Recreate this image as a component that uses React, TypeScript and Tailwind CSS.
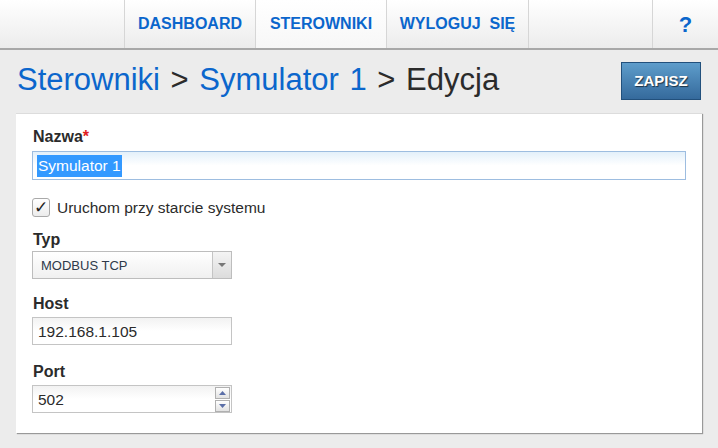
import React from 'react';

const font = { fontFamily: '"Liberation Sans", Arial, sans-serif' };

function NavCell({ label, active, className }: { label?: string; active?: boolean; className: string }) {
  return (
    <div
      className={`h-full flex items-center justify-center whitespace-nowrap border-l border-[#d6d6d6] font-bold text-[#0b66cc] ${
        active ? 'bg-gradient-to-b from-white to-[#f7f7f7]' : ''
      } ${className}`}
    >
      {label}
    </div>
  );
}

function Label({ children }: { children: React.ReactNode }) {
  return <div className="text-[16px] font-bold text-[#2b2b2b] leading-[18px]">{children}</div>;
}

export default function App() {
  return (
    <div className="w-[718px] h-[448px] bg-[#ececec] overflow-hidden" style={font}>
      {/* top navigation */}
      <div className="h-[50px] flex bg-gradient-to-b from-white to-[#ececec] border-b-2 border-[#a8a8a8]">
        <div className="w-[124px]" />
        <NavCell label="DASHBOARD" className="w-[131px] text-[16px]" />
        <NavCell label="STEROWNIKI" active className="w-[131px] text-[16px]" />
        <NavCell label={'WYLOGUJ\u00a0 SIĘ'} className="w-[142px] text-[16px]" />
        <NavCell className="w-[124px]" />
        <NavCell label="?" className="flex-1 text-[22px]" />
      </div>

      {/* header */}
      <div className="flex items-start justify-between pl-[17px] pr-[17px] pt-[11px] h-[63px]">
        <h1 className="text-[31px] leading-[38px] text-[#0b66cc] [word-spacing:2px]">
          Sterowniki <span className="text-[#2b2b2b]">&gt;</span> Symulator 1{' '}
          <span className="text-[#2b2b2b]">&gt; Edycja</span>
        </h1>
        <button className="mt-[1px] w-[80px] h-[38px] border border-[#22507c] bg-gradient-to-b from-[#5e9dcb] to-[#356a9c] text-white text-[15px] font-bold [text-shadow:1px_1px_1px_rgba(0,0,0,0.6)]">
          ZAPISZ
        </button>
      </div>

      {/* form card */}
      <div className="ml-[16px] w-[686px] h-[320px] bg-white border-t border-[#dcdcdc] shadow-[1px_1px_1px_rgba(0,0,0,0.35)] px-[16px] pt-[14px]">
        <div className="pl-[1px]">
          <Label>
            Nazwa<span className="text-[#e02020]">*</span>
          </Label>
        </div>
        <div className="mt-[5px] h-[29px] border border-[#9dbde0] bg-gradient-to-b from-[#e3f0fa] via-white to-white flex items-center px-[4px]">
          <span className="bg-[#3399ff] text-white text-[15.5px] leading-[22px] px-[1px]">Symulator 1</span>
        </div>

        <div className="mt-[16px] flex items-center gap-[7px]">
          <div className="w-[18px] h-[19px] rounded-[3px] border border-[#a9a9a9] bg-gradient-to-b from-white to-[#ececec] flex items-center justify-center text-[17px] leading-none text-[#222]">
            ✓
          </div>
          <span className="text-[15.5px] text-[#2b2b2b]">Uruchom przy starcie systemu</span>
        </div>

        <div className="mt-[12px] pl-[1px]">
          <Label>Typ</Label>
        </div>
        <div className="mt-[2px] w-[200px] h-[28px] border border-[#bdbdbd] flex bg-gradient-to-b from-white to-[#f0f0f0]">
          <div className="flex-1 flex items-center pl-[8px] text-[13px] text-[#2f3a4a]">MODBUS TCP</div>
          <div className="w-[19px] border-l border-[#c4c4c4] bg-gradient-to-b from-[#f4f4f4] to-[#dcdcdc] flex items-center justify-center">
            <svg width="8" height="6" viewBox="0 0 8 6">
              <path d="M0 1h8L4 5z" fill="#777" />
            </svg>
          </div>
        </div>

        <div className="mt-[16px] pl-[1px]">
          <Label>Host</Label>
        </div>
        <div className="mt-[4px] w-[200px] h-[28px] border border-[#c4c4c4] bg-gradient-to-b from-[#f2f2f2] via-white to-white flex items-center px-[5px] text-[15.5px] text-[#2b2b2b]">
          192.168.1.105
        </div>

        <div className="mt-[18px] pl-[1px]">
          <Label>Port</Label>
        </div>
        <div className="mt-[4px] w-[200px] h-[28px] border border-[#c4c4c4] bg-gradient-to-b from-[#f2f2f2] via-white to-white flex items-center pl-[5px] pr-[1px] text-[15.5px] text-[#2b2b2b]">
          <span className="flex-1">502</span>
          <div className="flex flex-col gap-[1px] w-[15px]">
            <div className="h-[12px] border border-[#b0b0b0] bg-gradient-to-b from-white to-[#e2e2e2] flex items-center justify-center">
              <svg width="7" height="4" viewBox="0 0 7 4">
                <path d="M0 4h7L3.5 0z" fill="#5b6fa8" />
              </svg>
            </div>
            <div className="h-[12px] border border-[#b0b0b0] bg-gradient-to-b from-white to-[#e2e2e2] flex items-center justify-center">
              <svg width="7" height="4" viewBox="0 0 7 4">
                <path d="M0 0h7L3.5 4z" fill="#5b6fa8" />
              </svg>
            </div>
          </div>
        </div>
      </div>
    </div>
  );
}
